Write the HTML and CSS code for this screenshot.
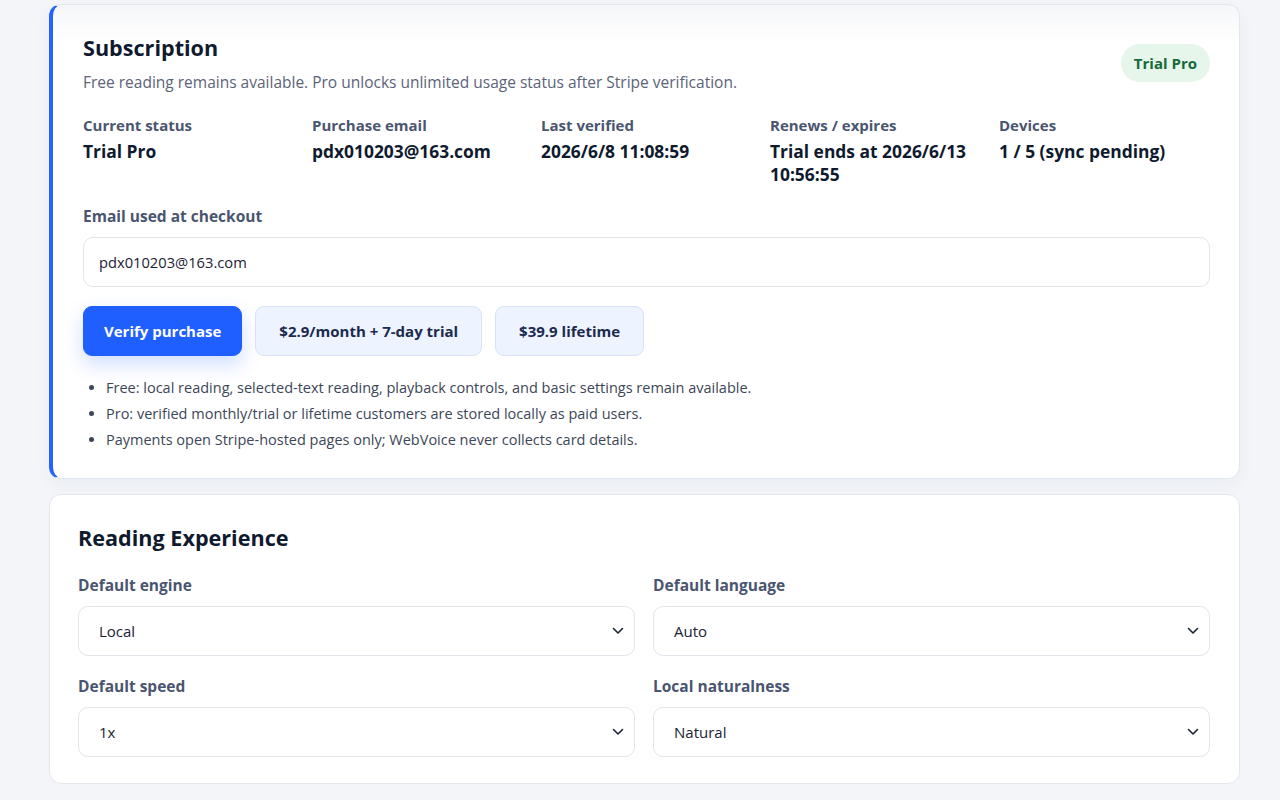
FILE: index.html
```html
<!DOCTYPE html>
<html lang="en">
<head>
<meta charset="utf-8">
<title>WebVoice Settings</title>
<link rel="stylesheet" href="styles.css">
</head>
<body>
<main class="settings">
  <section class="card card-accent">
    <header class="card-head">
      <div>
        <h2 class="card-title">Subscription</h2>
        <p class="card-sub">Free reading remains available. Pro unlocks unlimited usage status after Stripe verification.</p>
      </div>
      <span class="badge">Trial Pro</span>
    </header>

    <dl class="stats">
      <div class="stat">
        <dt>Current status</dt>
        <dd>Trial Pro</dd>
      </div>
      <div class="stat">
        <dt>Purchase email</dt>
        <dd>pdx010203@163.com</dd>
      </div>
      <div class="stat">
        <dt>Last verified</dt>
        <dd>2026/6/8 11:08:59</dd>
      </div>
      <div class="stat">
        <dt>Renews / expires</dt>
        <dd>Trial ends at 2026/6/13 10:56:55</dd>
      </div>
      <div class="stat">
        <dt>Devices</dt>
        <dd>1 / 5 (sync pending)</dd>
      </div>
    </dl>

    <label class="field">
      <span class="field-label">Email used at checkout</span>
      <input class="text-input" type="email" value="pdx010203@163.com">
    </label>

    <div class="actions">
      <button class="btn btn-primary" type="button">Verify purchase</button>
      <button class="btn btn-soft" type="button">$2.9/month + 7-day trial</button>
      <button class="btn btn-soft" type="button">$39.9 lifetime</button>
    </div>

    <ul class="notes">
      <li>Free: local reading, selected-text reading, playback controls, and basic settings remain available.</li>
      <li>Pro: verified monthly/trial or lifetime customers are stored locally as paid users.</li>
      <li>Payments open Stripe-hosted pages only; WebVoice never collects card details.</li>
    </ul>
  </section>

  <section class="card card-plain">
    <h2 class="card-title">Reading Experience</h2>
    <div class="form-grid">
      <label class="field">
        <span class="field-label">Default engine</span>
        <select class="select"><option>Local</option></select>
      </label>
      <label class="field">
        <span class="field-label">Default language</span>
        <select class="select"><option>Auto</option></select>
      </label>
      <label class="field">
        <span class="field-label">Default speed</span>
        <select class="select"><option>1x</option></select>
      </label>
      <label class="field">
        <span class="field-label">Local naturalness</span>
        <select class="select"><option>Natural</option></select>
      </label>
    </div>
  </section>
</main>
</body>
</html>
```

FILE: styles.css
```css
* {
  box-sizing: border-box;
}

html, body {
  margin: 0;
  background: #f3f5f9;
}

body {
  font-family: "Open Sans", "Noto Sans", sans-serif;
  color: #0f1a2e;
  -webkit-font-smoothing: antialiased;
}

.settings {
  width: 1191px;
  margin-left: 49px;
  padding: 4px 0 16px;
  display: flex;
  flex-direction: column;
  gap: 15px;
}

/* ---------- cards ---------- */
.card {
  background: #ffffff;
  border: 1px solid #e3e6ec;
  border-radius: 12px;
}

.card-accent {
  border-left: 4px solid #2563ff;
  padding: 28px 29px 25px 30px;
  background: linear-gradient(180deg, #f6f7f9 0px, #ffffff 40px);
  box-shadow: 0 6px 18px rgba(30, 41, 59, 0.04);
}

.card-plain {
  padding: 28px 29px 26px 28px;
}

.card-head {
  display: flex;
  justify-content: space-between;
  align-items: center;
}

.card-title {
  margin: 0;
  font-size: 21.6px;
  line-height: 29px;
  font-weight: 700;
  color: #0f1a2e;
}

.card-plain .card-title {
  line-height: 30px;
}

.card-sub {
  margin: 9px 0 0;
  font-size: 15.5px;
  line-height: 22px;
  color: #5b6478;
}

.badge {
  display: inline-flex;
  align-items: center;
  height: 38px;
  padding: 0 13px;
  border-radius: 999px;
  background: #e6f6eb;
  color: #17693a;
  font-size: 15px;
  font-weight: 700;
}

/* ---------- status grid ---------- */
.stats {
  display: grid;
  grid-template-columns: repeat(5, 1fr);
  column-gap: 18px;
  margin: 22px 0 0;
}

.stat dt {
  font-size: 15px;
  line-height: 20px;
  font-weight: 700;
  color: #4a5570;
}

.stat dd {
  margin: 5px 0 0;
  font-size: 17.4px;
  line-height: 23px;
  font-weight: 700;
  color: #0f1a2e;
}

/* ---------- form fields ---------- */
.field {
  display: flex;
  flex-direction: column;
  gap: 11px;
}

.card-accent .field {
  margin-top: 20px;
}

.field-label {
  font-size: 15.5px;
  line-height: 20px;
  font-weight: 700;
  color: #4a5570;
}

.text-input,
.select {
  height: 50px;
  width: 100%;
  border: 1px solid #e1e4ea;
  border-radius: 10px;
  background: #ffffff;
  font-family: inherit;
  font-size: 15px;
  color: #1a2233;
  outline: none;
}

.text-input {
  padding: 0 15px;
  font-size: 14.7px;
}

.select {
  appearance: none;
  -webkit-appearance: none;
  padding: 0 36px 0 20px;
  background-image: url("data:image/svg+xml,%3Csvg xmlns='http://www.w3.org/2000/svg' width='12' height='8' viewBox='0 0 12 8'%3E%3Cpath d='M1.5 1.5 6 6l4.5-4.5' fill='none' stroke='%231a2233' stroke-width='1.6' stroke-linecap='round' stroke-linejoin='round'/%3E%3C/svg%3E");
  background-repeat: no-repeat;
  background-position: right 10px center;
}

.form-grid {
  display: grid;
  grid-template-columns: 1fr 1fr;
  column-gap: 18px;
  row-gap: 20px;
  margin-top: 22px;
}

/* ---------- buttons ---------- */
.actions {
  display: flex;
  gap: 13px;
  margin-top: 19px;
}

.btn {
  height: 50px;
  border-radius: 9px;
  font-family: inherit;
  font-size: 15px;
  font-weight: 700;
  cursor: pointer;
}

.btn-primary {
  padding: 0 20px;
  border: 1px solid #1f5eff;
  background: #1f5eff;
  color: #ffffff;
  box-shadow: 0 8px 20px rgba(31, 94, 255, 0.22);
}

.btn-soft {
  padding: 0 23px;
  border: 1px solid #d6e2fb;
  background: #eef4ff;
  color: #1b2a4e;
}

/* ---------- notes ---------- */
.notes {
  margin: 19px 0 0;
  padding-left: 23px;
  font-size: 14.5px;
  line-height: 26px;
  color: #3c4658;
}
```
